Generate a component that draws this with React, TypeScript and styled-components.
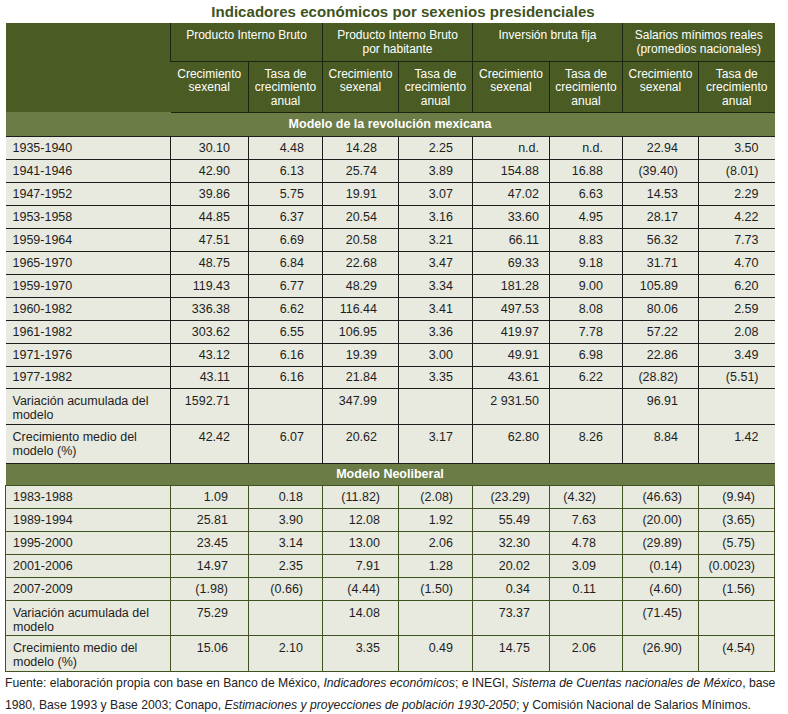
import React from "react";
import styled, { createGlobalStyle } from "styled-components";

const Global = createGlobalStyle`
  html, body { margin: 0; padding: 0; background: #ffffff; }
  body { font-family: "Liberation Sans", Arial, sans-serif; color: #1e1e1e; }
`;

const Page = styled.div`
  width: 788px;
  padding: 0 0 0 5px;
  box-sizing: border-box;
`;

const Title = styled.h1`
  margin: 0;
  width: 769px;
  height: 23px;
  line-height: 24px;
  padding-left: 27px;
  box-sizing: border-box;
  text-align: center;
  font-size: 15px;
  font-weight: bold;
  color: #3e5320;
  letter-spacing: 0.05px;
`;

const Table = styled.table`
  width: 769px;
  border-collapse: collapse;
  table-layout: fixed;
  font-size: 12.5px;
`;

const HeadCell = styled.th`
  background: #4a5c24;
  color: #ffffff;
  font-weight: normal;
  font-size: 12px;
  line-height: 13.5px;
  text-align: center;
  vertical-align: top;
  padding: 6px 4px 0;
  border-left: 1px solid #1d2410;
  border-bottom: 1px solid #1d2410;
  &:first-child { border-left: none; }
`;

const CornerCell = styled.th`
  background: #4a5c24;
  border: none;
`;

const SectionCell = styled.td`
  background: #6b7c47;
  color: #ffffff;
  font-weight: bold;
  font-size: 12.5px;
  text-align: center;
  padding: 0;
`;

const Row = styled.tr<{ $h: number }>`
  height: ${(p) => p.$h}px;
`;

const LabelCell = styled.td<{ $line: string; $top?: boolean }>`
  background: #e8eadf;
  text-align: left;
  padding: ${(p) => (p.$top ? "5px 6px 0 7px" : "0 6px 0 7px")};
  vertical-align: ${(p) => (p.$top ? "top" : "middle")};
  line-height: 14px;
  border-top: 1px solid ${(p) => p.$line};
  border-bottom: 1px solid ${(p) => p.$line};
`;

const NumCell = styled.td<{ $line: string; $pr: number; $top?: boolean }>`
  background: #e8eadf;
  text-align: right;
  padding: ${(p) => (p.$top ? "5px" : "0")} ${(p) => p.$pr}px 0 0;
  vertical-align: ${(p) => (p.$top ? "top" : "middle")};
  line-height: 14px;
  white-space: nowrap;
  border: 1px solid ${(p) => p.$line};
  &:last-child { border-right: none; }
`;

const NeoLabelCell = styled(LabelCell)`
  border-left: 1px solid ${(p) => p.$line};
`;

const NeoNumCell = styled(NumCell)`
  &:last-child { border-right: 1px solid ${(p) => p.$line}; }
`;

const Footer = styled.p`
  margin: 0;
  font-size: 12.2px;
  line-height: 22px;
  color: #222222;
  white-space: nowrap;
`;

type DataRow = { label: string; values: string[]; h: number; top?: boolean };

const topRows: DataRow[] = [
  { label: "1935-1940", values: ["30.10", "4.48", "14.28", "2.25", "n.d.", "n.d.", "22.94", "3.50"], h: 23 },
  { label: "1941-1946", values: ["42.90", "6.13", "25.74", "3.89", "154.88", "16.88", "(39.40)", "(8.01)"], h: 23 },
  { label: "1947-1952", values: ["39.86", "5.75", "19.91", "3.07", "47.02", "6.63", "14.53", "2.29"], h: 23 },
  { label: "1953-1958", values: ["44.85", "6.37", "20.54", "3.16", "33.60", "4.95", "28.17", "4.22"], h: 23 },
  { label: "1959-1964", values: ["47.51", "6.69", "20.58", "3.21", "66.11", "8.83", "56.32", "7.73"], h: 23 },
  { label: "1965-1970", values: ["48.75", "6.84", "22.68", "3.47", "69.33", "9.18", "31.71", "4.70"], h: 23 },
  { label: "1959-1970", values: ["119.43", "6.77", "48.29", "3.34", "181.28", "9.00", "105.89", "6.20"], h: 23 },
  { label: "1960-1982", values: ["336.38", "6.62", "116.44", "3.41", "497.53", "8.08", "80.06", "2.59"], h: 23 },
  { label: "1961-1982", values: ["303.62", "6.55", "106.95", "3.36", "419.97", "7.78", "57.22", "2.08"], h: 23 },
  { label: "1971-1976", values: ["43.12", "6.16", "19.39", "3.00", "49.91", "6.98", "22.86", "3.49"], h: 23 },
  { label: "1977-1982", values: ["43.11", "6.16", "21.84", "3.35", "43.61", "6.22", "(28.82)", "(5.51)"], h: 22 },
  { label: "Variación acumulada del modelo", values: ["1592.71", "", "347.99", "", "2 931.50", "", "96.91", ""], h: 36, top: true },
  { label: "Crecimiento medio del modelo (%)", values: ["42.42", "6.07", "20.62", "3.17", "62.80", "8.26", "8.84", "1.42"], h: 39, top: true },
];

const neoRows: DataRow[] = [
  { label: "1983-1988", values: ["1.09", "0.18", "(11.82)", "(2.08)", "(23.29)", "(4.32)", "(46.63)", "(9.94)"], h: 23 },
  { label: "1989-1994", values: ["25.81", "3.90", "12.08", "1.92", "55.49", "7.63", "(20.00)", "(3.65)"], h: 23 },
  { label: "1995-2000", values: ["23.45", "3.14", "13.00", "2.06", "32.30", "4.78", "(29.89)", "(5.75)"], h: 23 },
  { label: "2001-2006", values: ["14.97", "2.35", "7.91", "1.28", "20.02", "3.09", "(0.14)", "(0.0023)"], h: 23 },
  { label: "2007-2009", values: ["(1.98)", "(0.66)", "(4.44)", "(1.50)", "0.34", "0.11", "(4.60)", "(1.56)"], h: 23 },
  { label: "Variación acumulada del modelo", values: ["75.29", "", "14.08", "", "73.37", "", "(71.45)", ""], h: 35, top: true },
  { label: "Crecimiento medio del modelo (%)", values: ["15.06", "2.10", "3.35", "0.49", "14.75", "2.06", "(26.90)", "(4.54)"], h: 36, top: true },
];

const topPad = [18, 18, 21, 19, 10, 19, 20, 16];
const neoPad = [20, 19, 18, 19, 19, 26, 16, 19];
const colWidths = [165, 78, 74, 76, 74, 77, 73, 76, 76];

const TOP_LINE = "#1c1c1c";
const NEO_LINE = "#3f5420";

const splitLabel = (label: string) => {
  if (label.startsWith("Variación")) return ["Variación acumulada del", "modelo"];
  if (label.startsWith("Crecimiento")) return ["Crecimiento medio del", "modelo (%)"];
  return [label];
};

const LabelText: React.FC<{ label: string }> = ({ label }) => {
  const parts = splitLabel(label);
  return (
    <>
      {parts.map((p, i) => (
        <React.Fragment key={i}>
          {i > 0 && <br />}
          {p}
        </React.Fragment>
      ))}
    </>
  );
};

export default function App() {
  return (
    <Page>
      <Global />
      <Title>Indicadores económicos por sexenios presidenciales</Title>
      <Table>
        <colgroup>
          {colWidths.map((w, i) => (
            <col key={i} style={{ width: w }} />
          ))}
        </colgroup>
        <thead>
          <Row $h={38}>
            <CornerCell rowSpan={2} />
            <HeadCell colSpan={2}>Producto Interno Bruto</HeadCell>
            <HeadCell colSpan={2}>
              Producto Interno Bruto
              <br />
              por habitante
            </HeadCell>
            <HeadCell colSpan={2}>Inversión bruta fija</HeadCell>
            <HeadCell colSpan={2}>
              Salarios mínimos reales
              <br />
              (promedios nacionales)
            </HeadCell>
          </Row>
          <Row $h={51}>
            {[0, 1, 2, 3].map((g) => (
              <React.Fragment key={g}>
                <HeadCell>
                  Crecimiento
                  <br />
                  sexenal
                </HeadCell>
                <HeadCell>
                  Tasa de
                  <br />
                  crecimiento
                  <br />
                  anual
                </HeadCell>
              </React.Fragment>
            ))}
          </Row>
        </thead>
        <tbody>
          <Row $h={24}>
            <SectionCell colSpan={9}>Modelo de la revolución mexicana</SectionCell>
          </Row>
          {topRows.map((r) => (
            <Row key={r.label} $h={r.h}>
              <LabelCell $line={TOP_LINE} $top={r.top}>
                <LabelText label={r.label} />
              </LabelCell>
              {r.values.map((v, i) => (
                <NumCell key={i} $line={TOP_LINE} $pr={topPad[i]} $top={r.top}>
                  {v}
                </NumCell>
              ))}
            </Row>
          ))}
          <Row $h={22}>
            <SectionCell colSpan={9}>Modelo Neoliberal</SectionCell>
          </Row>
          {neoRows.map((r) => (
            <Row key={r.label} $h={r.h}>
              <NeoLabelCell $line={NEO_LINE} $top={r.top}>
                <LabelText label={r.label} />
              </NeoLabelCell>
              {r.values.map((v, i) => (
                <NeoNumCell key={i} $line={NEO_LINE} $pr={neoPad[i]} $top={r.top}>
                  {v}
                </NeoNumCell>
              ))}
            </Row>
          ))}
        </tbody>
      </Table>
      <Footer>
        Fuente: elaboración propia con base en Banco de México, <i>Indicadores económicos</i>; e INEGI,{" "}
        <i>Sistema de Cuentas nacionales de México</i>, base
        <br />
        1980, Base 1993 y Base 2003; Conapo, <i>Estimaciones y proyecciones de población 1930-2050</i>; y
        Comisión Nacional de Salarios Mínimos.
      </Footer>
    </Page>
  );
}
